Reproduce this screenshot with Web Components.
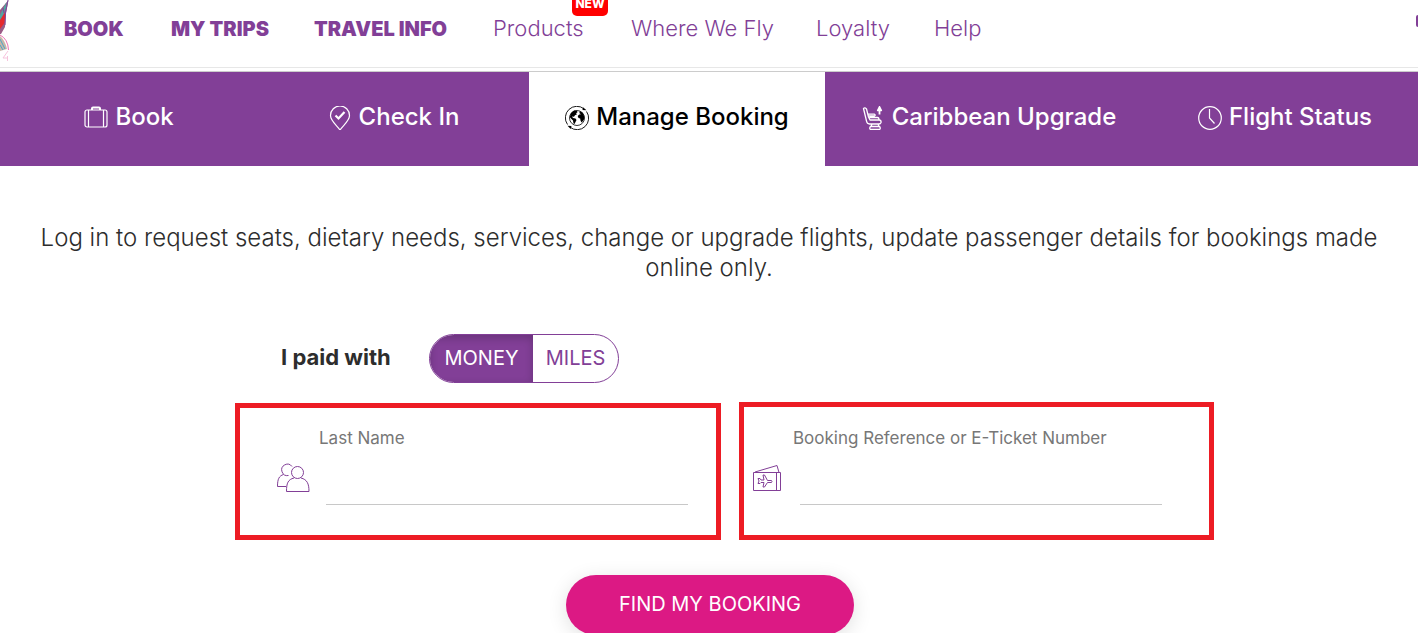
<!DOCTYPE html>
<html lang="en">
<head>
<meta charset="utf-8">
<title>Manage Booking</title>
<meta name="viewport" content="width=device-width, initial-scale=1">
<style>
  body {
    margin: 0;
    background: #fff;
    color: #2d2d2d;
    font-family: Inter, "Open Sans", sans-serif;
    --brand: #823f97;
    --accent: #dc1984;
    --mark: #ed1c24;
  }
</style>
</head>
<body>
<site-header></site-header>
<main>
  <service-tabs>
    <service-tab style="flex-grow:258">
      <svg slot="icon" viewBox="0 0 24 24" fill="none" stroke="currentColor" stroke-width="1.2"><rect x="1" y="4" width="22" height="17" rx="2"/><path d="M4.500 4v17M19.500 4v17"/><path d="M8 4V2.500q0-1 1-1h6q1 0 1 1V4" stroke-width="2"/></svg>
      Book
    </service-tab>
    <service-tab style="flex-grow:271">
      <svg slot="icon" viewBox="0 0 24 24" fill="none" stroke="currentColor" stroke-width="1.200"><path d="M12 24C9.500 20 2.500 15 2.500 9.500a9.500 9.500 0 0 1 19 0C21.500 15 14.500 20 12 24z"/><path d="M7.500 9.500l3 3 6-6.500" stroke-width="2.200"/></svg>
      Check In
    </service-tab>
    <service-tab active style="flex-grow:296">
      <svg slot="icon" viewBox="0 0 24 24" fill="none" stroke="currentColor"><circle cx="12" cy="12" r="7.500" stroke-width=".8"/><path d="M6 7l3-2.500 3 .2.500 1.500-1.500 1 1 1-2 1-1 1.500-2-.2 1 1.500 2.500.5 1 1.500-2 4-1-.5-.5-3-2.500-2.500L4.800 11zM14.500 5.200l3 1.300 1.800 4-.3 3-1.500 2-1 1-1-2-.3-2-1.700-.5-.8-2 1.500-1.500 1.800-.2-1.500-1z" fill="currentColor" stroke="none"/><path d="M2.500 18.500A11.500 11.500 0 0 1 19 2.800M21.500 5.500A11.500 11.500 0 0 1 5 21.200" stroke-width=".9"/><path d="M18 1.200l3.500 3-4-.2zM2.500 19.800l4 .2-.8 3z" fill="currentColor" stroke="none"/></svg>
      Manage Booking
    </service-tab>
    <service-tab style="flex-grow:327">
      <svg slot="icon" viewBox="0 0 24 24" fill="none" stroke="currentColor" stroke-width="1.300" stroke-linejoin="round"><path d="M2.500 2.500q1.500-1.500 3 .5l2 8 1.500 3h9.500q2 .5 1.500 2.500-.5 1.500-2 1.500H8.500Q6 18 5.500 15zM7 8.200h6.500q1.500.9 0 1.800h-6M8.500 11.500h8q1.500 0 1.500 2.500M11 18l-1 2.500M17 18l1 2.500M9.500 20.500h9q1.500 2 0 3h-9q-1.500-1 0-3z"/><path d="M18.500 8.500V4" stroke-width="1.800"/><path d="M16.500 4.500l2-4 2 4z" fill="currentColor"/></svg>
      Caribbean Upgrade
    </service-tab>
    <service-tab style="flex-grow:266">
      <svg slot="icon" viewBox="0 0 24 24" fill="none" stroke="currentColor" stroke-width="1.200"><circle cx="12" cy="12" r="11.300"/><path d="M11.500 3v9l5 5.500"/></svg>
      Flight Status
    </service-tab>
  </service-tabs>
  <booking-finder></booking-finder>
</main>

<script>
class BaseElement extends HTMLElement {
  connectedCallback() {
    if (this.shadowRoot) return;
    this.attachShadow({ mode: 'open' }).innerHTML = this.render();
  }
}

class SiteHeader extends BaseElement {
  render() {
    return `<style>
      :host { display: block; box-sizing: border-box; height: 68px; border-bottom: 1px solid #e7e7e7; }
      header { display: flex; justify-content: space-between; height: 56px; }
      .brand { width: 64px; height: 64px; flex: none; }
      .brand svg { display: block; }
      nav { flex: 1; }
      ul { display: grid; grid-template-columns: 107px 143px 179px 138px 185px 118px auto; align-items: baseline; align-content: center; justify-content: start; height: 56px; margin: 0; padding: 0; list-style: none; }
      li { white-space: nowrap; }
      a { position: relative; color: var(--brand); font-size: 22px; font-weight: 300; line-height: 30px; text-decoration: none; }
      .strong a { font-size: 20px; font-weight: 900; }
      .badge { position: absolute; left: 79px; top: -21px; width: 36px; height: 22px; border-radius: 5px; background: #f00; color: #fff; font-size: 12px; line-height: 20px; font-weight: 800; text-align: center; }
      .search { align-self: center; width: 2px; height: 12px; margin-top: -14px; padding: 0; border: 0; border-radius: 8px 0 0 8px; background: var(--brand); }
    </style>
    <header>
      <a class="brand" href="#" aria-label="Home"><svg width="12" height="64" viewBox="0 0 12 64">
        <path d="M8.500 0L6 13 5 27 1 34H0V10z" fill="#9a5b86"/>
        <path d="M6.500 2L0 15v7L6 8z" fill="#4fa6a0"/><path d="M5.500 12L0 20v9l4.500-6z" fill="#e5292d"/>
        <path d="M8 0L5.500 13 5 25M3 8l1 5" stroke="#7b4a9c" fill="none"/>
        <path d="M0 36q5 4 7 13l-7 2z" fill="#c9b6a8"/><path d="M0 39l5 10M0 45l3 5" stroke="#4ba6c9" fill="none"/>
        <path d="M0 35q8 4 8.500 15" stroke="#ee6fb0" fill="none"/><path d="M8 51l-5 7h5M7.500 56v5" stroke="#f6c3dc" fill="none"/></svg></a>
      <nav aria-label="Main"><ul>
        <li class="strong"><a href="#">BOOK</a></li>
        <li class="strong"><a href="#">MY TRIPS</a></li>
        <li class="strong"><a href="#">TRAVEL INFO</a></li>
        <li><a href="#">Products<span class="badge">NEW</span></a></li>
        <li><a href="#">Where We Fly</a></li>
        <li><a href="#">Loyalty</a></li>
        <li><a href="#">Help</a></li>
      </ul></nav>
      <button class="search" aria-label="Search"></button>
    </header>`;
  }
}

class ServiceTabs extends BaseElement {
  render() {
    return `<style>
      :host { display: block; margin-top: 3px; border-top: 1px solid #ccc; }
      nav { display: flex; height: 94px; background: var(--brand); }
    </style><nav aria-label="Services"><slot></slot></nav>`;
  }
}

class ServiceTab extends BaseElement {
  render() {
    return `<style>
      :host { display: block; flex: 1 1 0; color: #fff; }
      :host([active]) { background: #fff; color: #000; }
      a { display: flex; align-items: center; justify-content: center; gap: 7px; height: 90px; color: inherit; font-size: 24px; font-weight: 500; line-height: 30px; text-decoration: none; white-space: nowrap; }
      ::slotted(svg) { width: 24px; height: 24px; margin-top: 2px; flex: none; }
    </style><a href="#"><slot name="icon"></slot><span><slot></slot></span></a>`;
  }
}

class PaymentToggle extends BaseElement {
  render() {
    return `<style>
      :host { display: block; }
      fieldset { display: flex; align-items: center; margin: 0; padding: 0; border: 0; min-width: 0; }
      legend { float: left; padding: 0; width: 148px; font-size: 22px; font-weight: 700; line-height: 30px; margin-bottom: 4px; }
      .group { display: flex; box-sizing: border-box; height: 49px; width: 190px; border: 1px solid var(--brand); border-radius: 25px; overflow: hidden; }
      label { display: flex; align-items: center; justify-content: center; flex: 85; color: var(--brand); font-size: 20px; line-height: 24px; padding-bottom: 2px; cursor: pointer; }
      label:first-child { flex: 103; }
      label:has(:checked) { background: var(--brand); color: #fff; box-shadow: inset 0 3px 8px rgba(0,0,0,.2); }
      input { position: absolute; opacity: 0; width: 1px; height: 1px; margin: 0; }
    </style>
    <fieldset><legend>I paid with</legend><div class="group">
      <label><input type="radio" name="pay" checked>MONEY</label>
      <label><input type="radio" name="pay">MILES</label>
    </div></fieldset>`;
  }
}

class IconField extends BaseElement {
  render() {
    return `<style>
      :host { display: block; box-sizing: border-box; border: 5px solid var(--mark); padding: 18px 28px 30px var(--inset, 36px); }
      label { display: block; margin: 0 0 3px 43px; color: #777; font-size: 17px; line-height: 24px; white-space: nowrap; }
      .row { display: flex; align-items: center; height: 52px; }
      ::slotted(svg) { flex: none; width: 34px; height: 34px; margin-bottom: 4px; color: var(--brand); }
      input { flex: 1; min-width: 0; height: 52px; margin: 0 0 0 16px; padding: 0; box-sizing: border-box; border: 0; border-bottom: 1px solid #c8c8c8; background: none; font: inherit; font-size: 20px; outline: 0; }
    </style>
    <label for="field">${this.getAttribute('label')}</label>
    <div class="row"><slot></slot><input id="field" type="text"></div>`;
  }
}

class BookingFinder extends BaseElement {
  render() {
    return `<style>
      :host { display: block; padding-top: 57px; }
      p { margin: 0; padding: 0 24px; text-align: center; font-size: 24px; font-weight: 300; line-height: 30px; }
      payment-toggle { margin: 51px 0 0 281px; }
      .fields { display: grid; grid-template-columns: 486fr 475fr; gap: 18px; margin: 20px 204px 0 235px; }
      icon-field:last-child { --inset: 6px; padding-right: 47px; margin-top: -1px; padding-top: 19px; }
      .action { display: flex; justify-content: center; margin-top: 35px; padding-left: 2px; }
      button { width: 288px; height: 60px; padding: 0 0 2px; border: 0; border-radius: 30px; background: var(--accent); color: #fff; font: inherit; font-size: 20px; box-shadow: 0 4px 20px rgba(0,0,0,.12); }
    </style>
    <p>Log in to request seats, dietary needs, services, change or upgrade flights, update passenger details for bookings made online only.</p>
    <payment-toggle></payment-toggle>
    <div class="fields">
      <icon-field label="Last Name"><svg viewBox="0 0 34 34" fill="none" stroke="currentColor"><path d="M16 6.500A5.700 5.700 0 1 0 12.500 15.500M7.500 14.500C3 16 1.500 19 1.500 26.500H10"/><circle cx="21.500" cy="12.500" r="6"/><path d="M18 18C12 19.500 10.500 23 10.500 31.500h22.500C33 23.500 31 19.500 25 18"/></svg></icon-field>
      <icon-field label="Booking Reference or E-Ticket Number"><svg viewBox="0 0 34 34" fill="none" stroke="currentColor"><path d="M3.500 12.500h27v18h-27zM26.500 12.500v18M5 12l22-6.500 2 7M8 18.500l1 2.500-1 2.500h2l1-1h3l-1 4.500h1.500l3-4.500h4q1-1.500 0-2h-4L14.500 15H13l1 5h-3l-1-1.500z"/></svg></icon-field>
    </div>
    <div class="action"><button type="button">FIND MY BOOKING</button></div>`;
  }
}

customElements.define('site-header', SiteHeader);
customElements.define('service-tabs', ServiceTabs);
customElements.define('service-tab', ServiceTab);
customElements.define('payment-toggle', PaymentToggle);
customElements.define('icon-field', IconField);
customElements.define('booking-finder', BookingFinder);
</script>
</body>
</html>
